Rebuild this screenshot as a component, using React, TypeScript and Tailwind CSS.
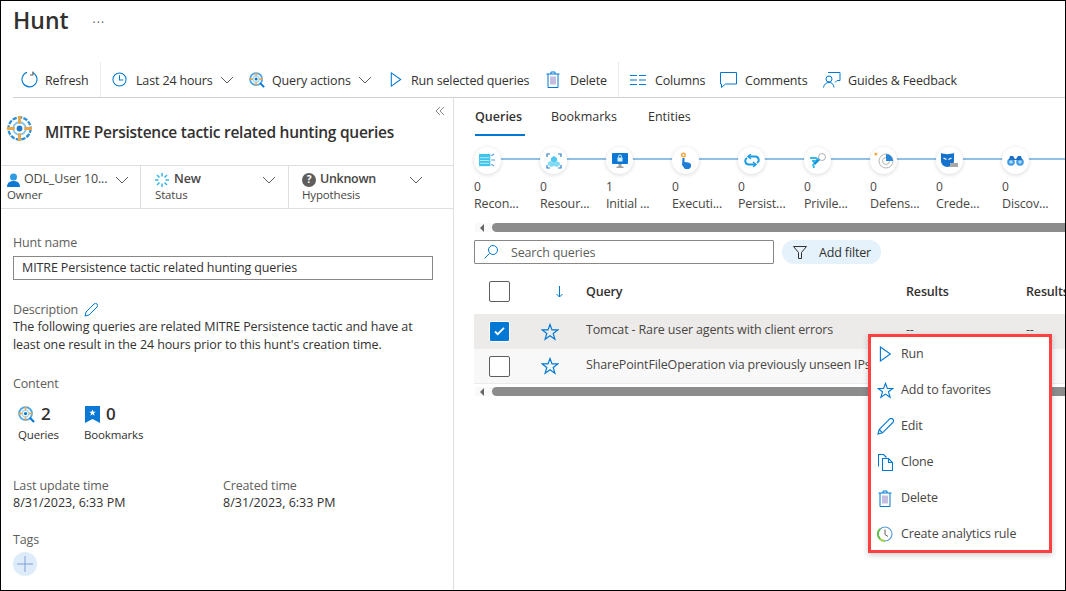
import type { ReactNode } from "react"

const Chevron = ({ className = "" }: { className?: string }) => (
  <svg viewBox="0 0 14 8" className={`h-[8px] w-[14px] ${className}`} fill="none" stroke="#605e5c" strokeWidth="1">
    <path d="M1 1l6 6 6-6" />
  </svg>
)

const Star = ({ size = 18 }: { size?: number }) => (
  <svg viewBox="0 0 18 18" width={size} height={size} fill="none" stroke="#0078d4" strokeWidth="1.2" strokeLinejoin="miter">
    <path d="M9 1.5l2 5.4h5.800l-4.600 3.500 1.700 5.800L9 12.800l-4.900 3.400 1.700-5.800L1.200 6.900H7z" />
  </svg>
)

const Play = ({ size = 14 }: { size?: number }) => (
  <svg viewBox="0 0 12 16" width={size * 0.8} height={size} fill="none" stroke="#0078d4" strokeWidth="1.1">
    <path d="M1 1l10 7-10 7z" />
  </svg>
)

const Trash = () => (
  <svg viewBox="0 0 14 17" width="14" height="17" fill="none" stroke="#0078d4" strokeWidth="1">
    <path d="M0.5 3h13M5 3V1h4v2M2 3v13.500h10V3" />
    <path d="M5 5.500v8M7 5.500v8M9 5.500v8" stroke="#8a7cc0" />
  </svg>
)

const QueryTarget = ({ size = 16 }: { size?: number }) => (
  <svg viewBox="0 0 18 18" width={size} height={size} fill="none">
    <circle cx="8" cy="8" r="6.800" stroke="#4da6e8" strokeWidth="2" />
    <circle cx="8" cy="8" r="3.500" stroke="#a8d8f5" strokeWidth="1.500" />
    <path d="M8 .5v4M8 11.500v4M.5 8h4M11.500 8h4" stroke="#f0a94a" strokeWidth="1.800" />
    <circle cx="8" cy="8" r="1.700" fill="#0078d4" />
    <path d="M12.500 12.500l4.500 4.500" stroke="#0078d4" strokeWidth="2.200" />
  </svg>
)

const HuntLogo = () => (
  <svg viewBox="0 0 28 28" width="27" height="27" fill="none" className="mb-[6px]">
    <circle cx="14" cy="14" r="11.500" stroke="#2f8fd8" strokeWidth="2.400" strokeDasharray="4.500 1.300" />
    <circle cx="14" cy="14" r="6.500" stroke="#7fc4f0" strokeWidth="2" />
    <circle cx="14" cy="14" r="3" fill="#1e78d0" />
    <path d="M14 1v8M14 19v8M1 14h8M19 14h8" stroke="#eca544" strokeWidth="3" />
  </svg>
)

const toolbarItems: { label: string; icon: ReactNode; iconBox: string; textBox: string; chevron?: string }[] = [
  {
    label: "Refresh",
    iconBox: "ml-[20px] w-[24px]",
    textBox: "w-[55px]",
    icon: (
      <svg viewBox="0 0 17 17" width="17" height="17" fill="none" stroke="#0078d4" strokeWidth="1.100">
        <path d="M6 1.300a7.500 7.500 0 1 0 5.500 .2" />
        <path d="M12 0.500v3.500h-3" stroke="#605e5c" />
      </svg>
    ),
  },
  {
    label: "Last 24 hours",
    iconBox: "ml-[11px] w-[24px]",
    textBox: "w-[84px]",
    chevron: "mr-[15px]",
    icon: (
      <svg viewBox="0 0 16 16" width="15" height="15" fill="none" stroke="#0078d4" strokeWidth="1.100">
        <circle cx="8" cy="8" r="7" />
        <path d="M8 3.500V8.500H12" />
      </svg>
    ),
  },
  {
    label: "Query actions",
    iconBox: "w-[23px]",
    textBox: "w-[86px]",
    chevron: "mr-[18px]",
    icon: <QueryTarget />,
  },
  { label: "Run selected queries", iconBox: "w-[21px]", textBox: "w-[135px]", icon: <Play size={15} /> },
  { label: "Delete", iconBox: "w-[24px]", textBox: "w-[48px]", icon: <Trash /> },
  {
    label: "Columns",
    iconBox: "ml-[11px] w-[25px]",
    textBox: "w-[65px]",
    icon: (
      <svg viewBox="0 0 16 10" width="16" height="10" fill="none" stroke="#0078d4" strokeWidth="1">
        <path d="M0 .5h7M9 .5h7M0 5h7M9 5h7M0 9.500h7M9 9.500h7" />
      </svg>
    ),
  },
  {
    label: "Comments",
    iconBox: "w-[25px]",
    textBox: "w-[78px]",
    icon: (
      <svg viewBox="0 0 17 16" width="17" height="16" fill="none" stroke="#0078d4" strokeWidth="1">
        <path d="M.5 .5h16v11.500H5.500L1.500 15.500V12H.5z" />
      </svg>
    ),
  },
  {
    label: "Guides & Feedback",
    iconBox: "w-[25px]",
    textBox: "w-[120px]",
    icon: (
      <svg viewBox="0 0 18 17" width="18" height="17" fill="none" stroke="#0078d4" strokeWidth="1">
        <path d="M5 1.500h12v8h-3l-2 2" />
        <circle cx="6" cy="8" r="3" fill="#fff" />
        <path d="M.5 16.500c.5-3 2.500-5 5.500-5s4.500 1.500 5 5" />
      </svg>
    ),
  },
]

const tactics: { count: number; label: string; icon: ReactNode }[] = [
  {
    count: 0,
    label: "Recon...",
    icon: (
      <svg viewBox="0 0 18 16" width="17" height="15">
        <rect x="0" y="1" width="12" height="13" fill="#3fc4ee" />
        <path d="M1 5h10M1 8h10M1 11h10" stroke="#bfeefb" />
        <path d="M13 3l3-2M13 7.500h4M13 12l3 2" stroke="#5a9bd8" strokeWidth="1.200" />
      </svg>
    ),
  },
  {
    count: 0,
    label: "Resour...",
    icon: (
      <svg viewBox="0 0 16 16" width="16" height="16" fill="none">
        <path d="M1 4V1h3M12 1h3v3M15 12v3h-3M4 15H1v-3" stroke="#2a80d0" strokeWidth="1.200" />
        <path d="M8 3l3 2v3l-3 2-3-2V5z" fill="#50c8ef" />
        <path d="M5 8l3 2v3l-3 1-3-2v-3zM11 8l3 2v2l-3 2-3-1v-3z" fill="#80dcf5" />
      </svg>
    ),
  },
  {
    count: 1,
    label: "Initial ...",
    icon: (
      <svg viewBox="0 0 16 15" width="16" height="15">
        <rect x="0" y="0" width="16" height="11" rx="1" fill="#0a78d4" />
        <rect x="5.500" y="4.500" width="5" height="4" fill="#d5efff" />
        <path d="M6.500 4.500V3.500a1.500 1.500 0 0 1 3 0V4.500" fill="none" stroke="#d5efff" />
        <path d="M6.500 11h3v2.500h2V15h-7v-1.500h2z" fill="#a0a0a0" />
      </svg>
    ),
  },
  {
    count: 0,
    label: "Executi...",
    icon: (
      <svg viewBox="0 0 12 17" width="12" height="17">
        <circle cx="3.500" cy="3" r="2.500" fill="#f2a93e" />
        <circle cx="3.500" cy="3" r="1" fill="#fff" />
        <path d="M2.500 6h2v4l4 0.500 2.500 1.500v3l-2 2h-4L2 13z" fill="#1c7ed6" />
      </svg>
    ),
  },
  {
    count: 0,
    label: "Persist...",
    icon: (
      <svg viewBox="0 0 16 13" width="16" height="13" fill="none" stroke="#1b9ce2" strokeWidth="2">
        <path d="M5 2.500h6a3.500 3.500 0 0 1 2 6.500M11 10.500H5a3.500 3.500 0 0 1-2-6.500" />
        <path d="M7 0L4 2.500 7 5M9 8l3 2.500L9 13" strokeWidth="1.500" />
      </svg>
    ),
  },
  {
    count: 0,
    label: "Privile...",
    icon: (
      <svg viewBox="0 0 18 17" width="18" height="17" fill="none">
        <circle cx="13" cy="5" r="3.500" stroke="#b0b0b0" />
        <path d="M10 7L5 12" stroke="#1490da" strokeWidth="3" />
        <path d="M1 6h6l2 2M3 9h4M4 12l1 4" stroke="#35b8ea" strokeWidth="2" />
      </svg>
    ),
  },
  {
    count: 0,
    label: "Defens...",
    icon: (
      <svg viewBox="0 0 20 17" width="20" height="17" fill="none">
        <circle cx="1.800" cy="2" r="1.500" fill="#f2a93e" />
        <circle cx="12" cy="9" r="7" stroke="#b5b5b5" />
        <circle cx="12" cy="9" r="3.500" stroke="#b5b5b5" />
        <path d="M12 2a7 7 0 0 1 7 7h-7z" fill="#2886d8" />
      </svg>
    ),
  },
  {
    count: 0,
    label: "Crede...",
    icon: (
      <svg viewBox="0 0 17 15" width="17" height="15">
        <path d="M0 0c3 1.500 9 1.500 13 0v8c0 3-3 6-6.500 6S0 11 0 8z" fill="#1471cc" />
        <path d="M2.500 5l3 1.500M10.500 5l-3 1.500" stroke="#fff" strokeWidth="1.300" />
        <rect x="9" y="10" width="8" height="4" fill="#a8a8a8" />
      </svg>
    ),
  },
  {
    count: 0,
    label: "Discov...",
    icon: (
      <svg viewBox="0 0 17 11" width="17" height="11">
        <circle cx="4" cy="7" r="3.800" fill="#3f98e0" />
        <circle cx="13" cy="7" r="3.800" fill="#3f98e0" />
        <path d="M3 1h3l2 3h1l2-3h3l1 4H2z" fill="#1c6fc6" />
        <circle cx="4" cy="7" r="1.800" fill="#a8dcf8" />
        <circle cx="13" cy="7" r="1.800" fill="#a8dcf8" />
      </svg>
    ),
  },
]

const menuItems: { label: string; icon: ReactNode }[] = [
  { label: "Run", icon: <Play size={16} /> },
  { label: "Add to favorites", icon: <Star size={17} /> },
  {
    label: "Edit",
    icon: (
      <svg viewBox="0 0 17 17" width="17" height="17" fill="none" stroke="#0078d4" strokeWidth="1.100">
        <path d="M1 16l1.200-4.500L12.500 1.200a1.800 1.800 0 0 1 3.300 3.300L5.500 14.800z" />
        <path d="M2.200 11.500l3.300 3.300" />
      </svg>
    ),
  },
  {
    label: "Clone",
    icon: (
      <svg viewBox="0 0 15 17" width="15" height="17" fill="none" stroke="#0078d4" strokeWidth="1.100">
        <path d="M.5 12.500V.5h5l3 3" />
        <path d="M4.500 4.500h6l4 4v8h-10zM10.500 4.500v4h4" />
      </svg>
    ),
  },
  { label: "Delete", icon: <Trash /> },
  {
    label: "Create analytics rule",
    icon: (
      <svg viewBox="0 0 16 16" width="16" height="16" fill="none">
        <circle cx="8" cy="8" r="7" stroke="#5a9bd8" strokeWidth="1.200" />
        <path d="M3 13A7 7 0 0 1 3 3" stroke="#5cc040" strokeWidth="1.800" />
        <path d="M3 13a7 7 0 0 0 5 2" stroke="#a0d040" strokeWidth="1.800" />
        <path d="M8 3.500V8.500l3 2" stroke="#605e5c" />
      </svg>
    ),
  },
]

const ScrollBar = () => (
  <div className="flex h-[9px] items-center bg-[#f9f9f9] pl-[5px]">
    <div className="mr-[8px] h-0 w-0 border-y-[4px] border-r-[4px] border-y-transparent border-r-[#666]" />
    <div className="h-[9px] flex-1 rounded-l-[5px] bg-[#8c8c8c]" />
  </div>
)

function LeftPanel() {
  return (
    <div className="flex w-[453px] shrink-0 flex-col border-r border-[#e1dfdd]">
      <div className="relative flex h-[67px] items-center pl-[5px]">
        <HuntLogo />
        <h2 className="ml-[12px] mt-[3px] text-[15.500px] font-[600] tracking-[-0.260px] text-[#323130]">MITRE Persistence tactic related hunting queries</h2>
        <svg viewBox="0 0 10 10" width="10" height="10" fill="none" stroke="#8a8886" strokeWidth="1" className="absolute left-[434px] top-[8px]">
          <path d="M5 1L1 5l4 4M9 1L5 5l4 4" />
        </svg>
      </div>
      <div className="flex h-[44px] border-y border-[#e1dfdd]">
        <div className="relative w-[140px] border-r border-[#e1dfdd] pl-[6px] pt-[6px]">
          <div className="flex h-[15px] items-center">
            <svg viewBox="0 0 13 14" width="13" height="14" className="mr-[4px]">
              <circle cx="6.500" cy="4" r="3.500" fill="#2f9ae0" />
              <path d="M0 14c0-4 2.500-6 6.500-6s6.500 2 6.500 6z" fill="#0a78d4" />
            </svg>
            <span className="text-[#484644]">ODL_User 10...</span>
          </div>
          <div className="text-[11.500px] leading-[15px] text-[#484644]">Owner</div>
          <Chevron className="absolute left-[114px] top-[10px]" />
        </div>
        <div className="relative w-[148px] border-r border-[#e1dfdd] pl-[14px] pt-[6px]">
          <div className="flex h-[15px] items-center">
            <svg viewBox="0 0 14 14" width="14" height="14" className="mr-[5px]" stroke="#37b8e8" strokeWidth="1.500">
              <path d="M7 0v3.500M7 10.500V14M0 7h3.500M10.500 7H14M2 2l2.500 2.500M9.500 9.500L12 12M2 12l2.500-2.500M9.500 4.500L12 2" />
            </svg>
            <span className="font-[600] text-[#484644]">New</span>
          </div>
          <div className="text-[11.500px] leading-[15px] text-[#484644]">Status</div>
          <Chevron className="absolute left-[121px] top-[10px]" />
        </div>
        <div className="relative flex-1 pl-[13px] pt-[6px]">
          <div className="flex h-[15px] items-center">
            <span className="mr-[4px] flex h-[14px] w-[14px] items-center justify-center rounded-full bg-[#605e5c] text-[10px] font-[700] text-white">?</span>
            <span className="font-[600] tracking-[-0.300px] text-[#484644]">Unknown</span>
          </div>
          <div className="text-[11.500px] leading-[15px] text-[#484644]">Hypothesis</div>
          <Chevron className="absolute left-[120px] top-[10px]" />
        </div>
      </div>
      <div className="px-[12px]">
        <div className="mt-[25px] h-[17px] leading-[17px] text-[#605e5c]">Hunt name</div>
        <div className="mt-[5px] flex h-[24px] w-[420px] items-center border border-[#8a8886] pl-[8px] tracking-[-0.110px] text-[#323130]">
          MITRE Persistence tactic related hunting queries
        </div>
        <div className="mt-[21px] flex h-[18px] items-center text-[#605e5c]">
          Description
          <svg viewBox="0 0 14 14" width="14" height="14" fill="none" stroke="#0078d4" className="ml-[6px]">
            <path d="M1 13l1-4L10 1a1.500 1.500 0 0 1 3 3L5 12z" />
          </svg>
        </div>
        <p className="mt-[-1px] w-[415px] leading-[17.500px] tracking-[-0.100px] text-[#323130]">
          The following queries are related MITRE Persistence tactic and have at least one result in the 24 hours prior to this hunt's creation time.
        </p>
        <div className="mt-[22px] h-[17px] leading-[17px] text-[#605e5c]">Content</div>
        <div className="mt-[10px] flex">
          <div className="w-[66px] pl-[5px]">
            <div className="flex h-[24px] items-center">
              <QueryTarget size={17} />
              <span className="ml-[6px] text-[17px] font-[600] text-[#323130]">2</span>
            </div>
            <div className="mt-[1px] text-[11.500px] leading-[16px] text-[#323130]">Queries</div>
          </div>
          <div className="pl-[6px]">
            <div className="flex h-[24px] items-center">
              <svg viewBox="0 0 15 17" width="15" height="17">
                <path d="M0 0h15v17l-7.500-4L0 17z" fill="#0a78d4" />
                <path d="M7.500 3.500l1 2.300h2.300l-1.900 1.500.7 2.400-2.100-1.400-2.100 1.400.7-2.400-1.900-1.500h2.300z" fill="#fff" />
              </svg>
              <span className="ml-[6px] text-[17px] font-[600] text-[#323130]">0</span>
            </div>
            <div className="ml-[-1px] mt-[1px] text-[11.500px] leading-[16px] text-[#323130]">Bookmarks</div>
          </div>
        </div>
        <div className="mt-[34px] flex leading-[17px]">
          <div className="w-[210px]">
            <div className="text-[#605e5c]">Last update time</div>
            <div className="tracking-normal text-[#323130]">8/31/2023, 6:33 PM</div>
          </div>
          <div>
            <div className="text-[#605e5c]">Created time</div>
            <div className="tracking-normal text-[#323130]">8/31/2023, 6:33 PM</div>
          </div>
        </div>
        <div className="mt-[20px] h-[17px] leading-[17px] text-[#605e5c]">Tags</div>
        <div className="mt-[4px] flex h-[24px] w-[24px] items-center justify-center rounded-full bg-[#deecf9]">
          <svg viewBox="0 0 16 16" width="16" height="16" stroke="#7f9fd8" strokeWidth="1">
            <path d="M8 0v16M0 8h16" />
          </svg>
        </div>
      </div>
    </div>
  )
}

function QueriesPanel() {
  return (
    <div className="min-w-0 flex-1 overflow-hidden">
      <div className="flex h-[38px] items-center pl-[21px] tracking-normal text-[#323130]">
        <div className="relative mr-[26px] flex h-[38px] w-[50px] items-center font-[600]">
          Queries
          <div className="absolute bottom-0 left-0 right-0 h-[2px] bg-[#0078d4]" />
        </div>
        <div className="mr-[28px] w-[69px] whitespace-nowrap">Bookmarks</div>
        <div className="whitespace-nowrap">Entities</div>
      </div>
      <div className="relative flex h-[87px] pl-[20px]">
        <div className="absolute left-[20px] right-0 top-[22px] h-[2px] bg-[#8fc1e6]" />
        {tactics.map((t) => (
          <div key={t.label} className="relative w-[66px] shrink-0 pt-[11px] text-[#484644]">
            <div className="flex h-[27px] w-[27px] items-center justify-center rounded-full bg-white shadow-[0_1px_4px_rgba(0,0,0,0.15)]">
              {t.icon}
            </div>
            <div className="mt-[4px] text-[12px] leading-[17px]">{t.count}</div>
            <div className="whitespace-nowrap text-[12.500px] leading-[17px]">{t.label}</div>
          </div>
        ))}
      </div>
      <div className="ml-[21px]">
        <ScrollBar />
      </div>
      <div className="ml-[20px] mt-[8px] flex h-[24px] items-center">
        <div className="flex h-[24px] w-[300px] items-center rounded-[1px] border border-[#8a8886] pl-[9px] text-[#605e5c]">
          <svg viewBox="0 0 14 14" width="14" height="14" fill="none" stroke="#0078d4" className="mr-[13px]">
            <circle cx="9" cy="5" r="4.500" />
            <path d="M5.500 8.500L.5 13.500" />
          </svg>
          <span className="pt-[2px]">Search queries</span>
        </div>
        <div className="ml-[8px] flex h-[24px] w-[99px] items-center rounded-full bg-[#e5f1fb] pl-[11px] text-[#323130]">
          <svg viewBox="0 0 14 13" width="14" height="13" fill="none" stroke="#323130" className="mr-[12px]">
            <path d="M.5 .5h13L8.500 6.500v6h-3v-6z" />
          </svg>
          <span className="pt-[2px]">Add filter</span>
        </div>
      </div>
      <div className="flex h-[50px] items-center pt-[5px] text-[#323130]">
        <div className="ml-[35px] h-[21px] w-[21px] shrink-0 rounded-[2px] border border-[#605e5c]" />
        <div className="ml-[46px] w-[30px] shrink-0">
          <svg viewBox="0 0 7 12" width="7" height="12" fill="none" stroke="#0078d4" strokeWidth="1">
            <path d="M3.500 0v11M.5 8l3 3 3-3" />
          </svg>
        </div>
        <div className="w-[320px] shrink-0 pt-[2px] font-[600]">Query</div>
        <div className="w-[120px] shrink-0 whitespace-nowrap pt-[2px] font-[600]">Results</div>
        <div className="shrink-0 whitespace-nowrap pt-[2px] font-[600]">Results</div>
      </div>
      <div className="ml-[20px]">
        <div className="flex h-[35px] items-center bg-[#edebe9] text-[#484644]">
          <div className="ml-[15px] flex h-[21px] w-[21px] items-center justify-center rounded-[2px] border border-white bg-[#0078d4]">
            <svg viewBox="0 0 12 10" width="11" height="9" fill="none" stroke="#fff" strokeWidth="2">
              <path d="M1 5l3 3 7-7" />
            </svg>
          </div>
          <div className="ml-[31px] w-[45px]"><Star /></div>
          <div className="w-[320px] whitespace-nowrap pb-[2px]">Tomcat - Rare user agents with client errors</div>
          <div className="w-[120px] pb-[2px]">--</div>
          <div className="pb-[2px]">--</div>
        </div>
        <div className="flex h-[35px] items-center border-b border-[#edebe9] bg-[#f8f8f8] text-[#484644]">
          <div className="ml-[15px] h-[21px] w-[21px] rounded-[2px] border border-[#605e5c] bg-white" />
          <div className="ml-[31px] w-[45px]"><Star /></div>
          <div className="whitespace-nowrap pb-[2px]">SharePointFileOperation via previously unseen IPs</div>
        </div>
      </div>
      <div className="ml-[21px] mt-[3px]">
        <ScrollBar />
      </div>
    </div>
  )
}

export default function App() {
  return (
    <div className="relative flex h-[591px] w-[1066px] flex-col overflow-hidden border border-black bg-white font-['Open_Sans',sans-serif] text-[12.500px] tracking-[-0.150px]">
      <div className="flex h-[39px] shrink-0 items-center pl-[12px]">
        <h1 className="text-[23px] font-[600] tracking-normal text-[#323130]">Hunt</h1>
        <span className="ml-[24px] mt-[4px] text-[12px] leading-[12px] tracking-[1px] text-[#605e5c]">···</span>
      </div>
      <div className="ml-[12px] flex h-[58px] shrink-0 items-end border-b border-[#d2d0ce] text-[#323130]">
        <div className="-ml-[12px] flex h-[35px] items-center">
          {toolbarItems.map((item, i) => (
            <div key={item.label} className={`flex h-[35px] items-center ${i === 1 || i === 5 ? "border-l border-[#edebe9]" : ""}`}>
              <span className={`${item.iconBox} flex items-center`}>{item.icon}</span>
              <span className={`${item.textBox} whitespace-nowrap pt-[4px]`}>{item.label}</span>
              {item.chevron ? <Chevron className={item.chevron} /> : null}
            </div>
          ))}
        </div>
      </div>
      <div className="flex flex-1">
        <LeftPanel />
        <QueriesPanel />
      </div>
      <div className="absolute left-[867px] top-[333px] h-[219px] w-[184px] border-[3px] border-[#ff4040] bg-white shadow-[0_2px_6px_rgba(0,0,0,0.2)]">
        <div className="-mt-[1px]">
          {menuItems.map((m) => (
            <div key={m.label} className="flex h-[36px] items-center text-[#484644]">
              <span className="flex w-[30px] justify-center pr-[2px]">{m.icon}</span>
              <span className="whitespace-nowrap">{m.label}</span>
            </div>
          ))}
        </div>
      </div>
    </div>
  )
}
